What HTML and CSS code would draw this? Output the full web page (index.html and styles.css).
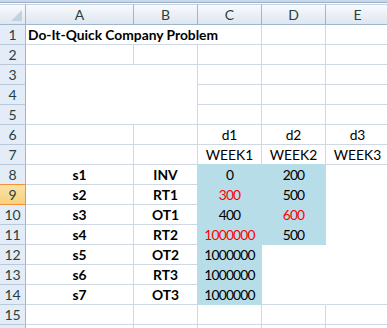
FILE: index.html
```html
<!DOCTYPE html>
<html lang="en">
<head>
    <meta charset="UTF-8">
    <title>Do-It-Quick Company Problem</title>
    <link rel="stylesheet" href="styles.css">
</head>
<body>
    <div class="topbar"></div>
    <div class="sheet">
        <!-- column headers -->
        <div class="corner"><span class="corner-mark"></span></div>
        <div class="colhead">A</div>
        <div class="colhead">B</div>
        <div class="colhead">C</div>
        <div class="colhead">D</div>
        <div class="colhead">E</div>

        <!-- row 1 -->
        <div class="rowhead">1</div>
        <div class="cell title">Do-It-Quick Company Problem</div>
        <div class="cell"></div>
        <div class="cell"></div>

        <!-- row 2 -->
        <div class="rowhead">2</div>
        <div class="cell"></div>
        <div class="cell"></div>
        <div class="cell"></div>
        <div class="cell"></div>
        <div class="cell"></div>

        <!-- rows 3-5, blank block under A:B -->
        <div class="rowhead">3</div>
        <div class="cell blank-block"></div>
        <div class="cell"></div>
        <div class="cell"></div>
        <div class="cell"></div>
        <div class="rowhead">4</div>
        <div class="cell"></div>
        <div class="cell"></div>
        <div class="cell"></div>
        <div class="rowhead">5</div>
        <div class="cell"></div>
        <div class="cell"></div>
        <div class="cell"></div>

        <!-- row 6 -->
        <div class="rowhead">6</div>
        <div class="cell"></div>
        <div class="cell"></div>
        <div class="cell center">d1</div>
        <div class="cell center">d2</div>
        <div class="cell center">d3</div>

        <!-- row 7 -->
        <div class="rowhead">7</div>
        <div class="cell"></div>
        <div class="cell"></div>
        <div class="cell center above-fill">WEEK1</div>
        <div class="cell center above-fill">WEEK2</div>
        <div class="cell center">WEEK3</div>

        <!-- row 8 -->
        <div class="rowhead before-selected">8</div>
        <div class="cell center bold">s1</div>
        <div class="cell center bold next-fill">INV</div>
        <div class="cell center fill num">0</div>
        <div class="cell center fill num">200</div>
        <div class="cell open"></div>

        <!-- row 9 -->
        <div class="rowhead selected">9</div>
        <div class="cell center bold">s2</div>
        <div class="cell center bold next-fill">RT1</div>
        <div class="cell center fill num red">300</div>
        <div class="cell center fill num">500</div>
        <div class="cell open"></div>

        <!-- row 10 -->
        <div class="rowhead">10</div>
        <div class="cell center bold">s3</div>
        <div class="cell center bold next-fill">OT1</div>
        <div class="cell center fill num">400</div>
        <div class="cell center fill num red">600</div>
        <div class="cell open"></div>

        <!-- row 11 -->
        <div class="rowhead">11</div>
        <div class="cell center bold">s4</div>
        <div class="cell center bold next-fill">RT2</div>
        <div class="cell center fill num red">1000000</div>
        <div class="cell center fill num">500</div>
        <div class="cell open"></div>

        <!-- row 12 -->
        <div class="rowhead">12</div>
        <div class="cell center bold">s5</div>
        <div class="cell center bold next-fill">OT2</div>
        <div class="cell center fill num">1000000</div>
        <div class="cell open"></div>
        <div class="cell open"></div>

        <!-- row 13 -->
        <div class="rowhead">13</div>
        <div class="cell center bold">s6</div>
        <div class="cell center bold next-fill">RT3</div>
        <div class="cell center fill num">1000000</div>
        <div class="cell open"></div>
        <div class="cell open"></div>

        <!-- row 14 -->
        <div class="rowhead">14</div>
        <div class="cell center bold">s7</div>
        <div class="cell center bold next-fill">OT3</div>
        <div class="cell center fill num">1000000</div>
        <div class="cell open last"></div>
        <div class="cell open last"></div>

        <!-- row 15 -->
        <div class="rowhead">15</div>
        <div class="cell"></div>
        <div class="cell"></div>
        <div class="cell"></div>
        <div class="cell"></div>
        <div class="cell"></div>

        <!-- next row, only its top edge is in view -->
        <div class="rowhead"></div>
        <div class="cell"></div>
        <div class="cell"></div>
        <div class="cell"></div>
        <div class="cell"></div>
        <div class="cell"></div>
    </div>
</body>
</html>
```

FILE: styles.css
```css
body {
    margin: 0;
    background: #fff;
    overflow: hidden;
    font-family: Lato, "Open Sans", sans-serif;
}
.topbar {
    height: 2px;
    background: #c9d6e6;
    border-bottom: 1px solid #9ab0ca;
    margin-bottom: 1px;
}
.sheet {
    display: grid;
    grid-template-columns: 26px 108px 64px 64px 64px 64px;
    grid-template-rows: 21px;
    grid-auto-rows: 20px;
    width: 390px;
}
.sheet > div {
    box-sizing: border-box;
    border-right: 1px solid #d0d7e5;
    border-bottom: 1px solid #d0d7e5;
    white-space: nowrap;
    overflow: hidden;
}

/* headers */
.corner,
.colhead {
    background: linear-gradient(#f8fafd, #dfe6ef);
    border-top: 1px solid #c5d3e3;
    border-right-color: #9eb6ce !important;
    border-bottom-color: #9eb6ce !important;
}
.corner {
    position: relative;
}
.corner-mark {
    position: absolute;
    right: 3px;
    bottom: 3px;
    width: 0;
    height: 0;
    border-left: 11px solid transparent;
    border-bottom: 11px solid #c3d0e0;
}
.colhead {
    color: #27413e;
    font-size: 14px;
    text-align: center;
    line-height: 19px;
}
.rowhead {
    background: #e4ecf7;
    color: #27413e;
    font-size: 14px;
    text-align: center;
    line-height: 19px;
    border-right-color: #9eb6ce !important;
    border-bottom-color: #b8c9dc !important;
}
.rowhead.before-selected {
    border-bottom-color: #f29436 !important;
}
.rowhead.selected {
    background: linear-gradient(#fbe2a8, #f8cf7e);
    border-right-color: #f29436 !important;
    border-bottom-color: #f29436 !important;
}

/* cells */
.cell {
    font-size: 13.8px;
    line-height: 19px;
    color: #000;
    padding: 0 2px;
}
.title {
    grid-column: span 3;
    font-weight: bold;
}
.blank-block {
    grid-column: span 2;
    grid-row: span 3;
}
.center {
    text-align: center;
}
.bold {
    font-weight: bold;
}
.num {
    letter-spacing: -0.8px;
}
.red {
    color: #ff0000;
}
.fill {
    background: #b7dde8;
    border-color: #b7dde8 !important;
}
.next-fill {
    border-right-color: #b7dde8 !important;
}
.above-fill {
    border-bottom-color: #b7dde8 !important;
}
.open {
    border-right-color: transparent !important;
    border-bottom-color: transparent !important;
}
.open.last {
    border-bottom-color: #d0d7e5 !important;
}
```
